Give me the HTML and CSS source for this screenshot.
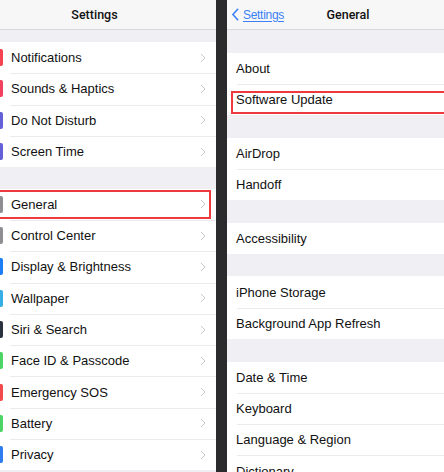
FILE: index.html
```html
<!DOCTYPE html>
<html>
<head>
<meta charset="utf-8">
<link rel="stylesheet" href="styles.css">
</head>
<body>
<div class="screen">
  <section class="panel left">
    <header class="nav nav-left"><span class="title">Settings</span></header>
    <div class="gap gap-small"></div>
    <div class="group">
      <div class="row"><span class="icon" style="background:#f5434f"></span><span class="label">Notifications</span><svg class="chev" viewBox="0 0 6 10"><path d="M1 1l4 4-4 4"/></svg></div>
      <div class="row"><span class="icon" style="background:#f2415f"></span><span class="label">Sounds &amp; Haptics</span><svg class="chev" viewBox="0 0 6 10"><path d="M1 1l4 4-4 4"/></svg></div>
      <div class="row"><span class="icon" style="background:#6461d8"></span><span class="label">Do Not Disturb</span><svg class="chev" viewBox="0 0 6 10"><path d="M1 1l4 4-4 4"/></svg></div>
      <div class="row"><span class="icon" style="background:#6461d8"></span><span class="label">Screen Time</span><svg class="chev" viewBox="0 0 6 10"><path d="M1 1l4 4-4 4"/></svg></div>
    </div>
    <div class="gap gap-mid"></div>
    <div class="group">
      <div class="row"><span class="icon" style="background:#8e8e93"></span><span class="label">General</span><svg class="chev" viewBox="0 0 6 10"><path d="M1 1l4 4-4 4"/></svg><span class="mark mark-general"></span></div>
      <div class="row"><span class="icon" style="background:#8e8e93"></span><span class="label">Control Center</span><svg class="chev" viewBox="0 0 6 10"><path d="M1 1l4 4-4 4"/></svg></div>
      <div class="row"><span class="icon" style="background:#1c7df5"></span><span class="label">Display &amp; Brightness</span><svg class="chev" viewBox="0 0 6 10"><path d="M1 1l4 4-4 4"/></svg></div>
      <div class="row"><span class="icon" style="background:#36aee6"></span><span class="label">Wallpaper</span><svg class="chev" viewBox="0 0 6 10"><path d="M1 1l4 4-4 4"/></svg></div>
      <div class="row"><span class="icon" style="background:#2a3240"></span><span class="label">Siri &amp; Search</span><svg class="chev" viewBox="0 0 6 10"><path d="M1 1l4 4-4 4"/></svg></div>
      <div class="row"><span class="icon" style="background:#4cd464"></span><span class="label">Face ID &amp; Passcode</span><svg class="chev" viewBox="0 0 6 10"><path d="M1 1l4 4-4 4"/></svg></div>
      <div class="row"><span class="icon" style="background:#f2494a"></span><span class="label">Emergency SOS</span><svg class="chev" viewBox="0 0 6 10"><path d="M1 1l4 4-4 4"/></svg></div>
      <div class="row"><span class="icon" style="background:#4cd464"></span><span class="label">Battery</span><svg class="chev" viewBox="0 0 6 10"><path d="M1 1l4 4-4 4"/></svg></div>
      <div class="row"><span class="icon" style="background:#2f7cf0"></span><span class="label">Privacy</span><svg class="chev" viewBox="0 0 6 10"><path d="M1 1l4 4-4 4"/></svg></div>
    </div>
  </section>
  <div class="divider"></div>
  <section class="panel right">
    <header class="nav nav-right">
      <a class="back" href="#"><svg class="back-chev" viewBox="0 0 8 14"><path d="M6.5 1L1 7l5.5 6"/></svg><span class="back-text">Settings</span></a>
      <span class="title title-right">General</span>
    </header>
    <div class="gap"></div>
    <div class="group">
      <div class="row r"><span class="label">About</span></div>
      <div class="row r"><span class="label">Software Update</span><span class="mark mark-update"></span></div>
    </div>
    <div class="gap"></div>
    <div class="group">
      <div class="row r"><span class="label">AirDrop</span></div>
      <div class="row r"><span class="label">Handoff</span></div>
    </div>
    <div class="gap"></div>
    <div class="group">
      <div class="row r"><span class="label">Accessibility</span></div>
    </div>
    <div class="gap"></div>
    <div class="group">
      <div class="row r"><span class="label">iPhone Storage</span></div>
      <div class="row r"><span class="label">Background App Refresh</span></div>
    </div>
    <div class="gap"></div>
    <div class="group">
      <div class="row r"><span class="label">Date &amp; Time</span></div>
      <div class="row r"><span class="label">Keyboard</span></div>
      <div class="row r"><span class="label">Language &amp; Region</span></div>
      <div class="row r"><span class="label">Dictionary</span></div>
    </div>
  </section>
</div>
</body>
</html>
```
FILE: styles.css
```css
* { box-sizing: border-box; }
html, body { margin: 0; padding: 0; }
body {
  font-family: "Liberation Sans", Arial, sans-serif;
  color: #111;
  background: #efeff4;
}
.screen {
  display: flex;
  width: 444px;
  height: 472px;
  overflow: hidden;
}
.panel {
  background: #efeff4;
  display: flex;
  flex-direction: column;
}
.left { width: 216px; flex: none; }
.right { flex: 1; min-width: 0; }
.divider { width: 11px; flex: none; background: #2b2b2d; }

.nav {
  height: 30px;
  flex: none;
  background: #f7f7f7;
  border-bottom: 1px solid #d9d9dc;
  display: flex;
  align-items: center;
}
.nav-left { justify-content: center; padding-right: 27px; }
.title {
  font-family: Roboto, "Liberation Sans", sans-serif;
  font-size: 12.5px;
  font-weight: 500;
  color: #111;
}
.back {
  width: 76px;
  flex: none;
  display: flex;
  align-items: center;
  padding-left: 5px;
  color: #3a7ff6;
  text-decoration: none;
}
.back-chev {
  width: 7px;
  height: 13px;
  fill: none;
  stroke: #3a7ff6;
  stroke-width: 1.8;
  stroke-linecap: round;
  stroke-linejoin: round;
  margin-right: 4px;
}
.back-text {
  font-size: 12px;
  letter-spacing: -0.3px;
  text-decoration: underline;
  text-underline-offset: 2px;
}
.title-right { width: 90px; text-align: center; }

.gap { height: 22.5px; flex: none; }
.gap-small { height: 12px; }
.gap-mid { height: 21.5px; }

.group { background: #fff; flex: none; }
.row {
  position: relative;
  height: 31.3px;
  display: flex;
  align-items: center;
  font-size: 13px;
}
.row + .row::before {
  content: "";
  position: absolute;
  top: 0;
  left: 10px;
  right: 0;
  border-top: 1px solid #ebebee;
}
.row.r { padding-left: 9px; }
.icon {
  width: 3px;
  height: 17px;
  border-radius: 0 2px 2px 0;
  margin-right: 8px;
  flex: none;
}
.label { flex: 1; white-space: nowrap; }
.chev {
  width: 6px;
  height: 10px;
  fill: none;
  stroke: #c8c8cc;
  stroke-width: 1;
  margin-right: 10px;
  flex: none;
}
.mark {
  position: absolute;
  border: 2.5px solid #ee3a3f;
}
.mark-general { top: 1px; left: -3px; right: 5px; height: 29px; }
.mark-update { top: 7px; left: 4px; right: -10px; height: 23px; }
```
